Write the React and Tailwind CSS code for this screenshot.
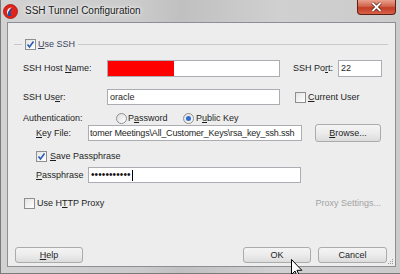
import React from "react";

function Check({ checked }) {
  return (
    <span className="w-[11px] h-[11px] shrink-0 border border-[#8f8f8f] bg-gradient-to-br from-[#e4e4e4] to-white flex items-center justify-center">
      {checked && (
        <svg width="9" height="9" viewBox="0 0 9 9">
          <path d="M1.5 4.5 L3.5 7 L7.5 1.5" fill="none" stroke="#2a5bb8" strokeWidth="1.6" />
        </svg>
      )}
    </span>
  );
}

function Radio({ checked }) {
  return (
    <span className="w-[11px] h-[11px] shrink-0 rounded-full border border-[#8f8f8f] bg-gradient-to-br from-[#dcdcdc] to-white flex items-center justify-center">
      {checked && <span className="w-[5px] h-[5px] rounded-full bg-[#2f6bd0]" />}
    </span>
  );
}

function Btn({ className = "", children }) {
  return (
    <div
      className={`h-[16px] shrink-0 rounded-[3px] border border-[#ababab] bg-gradient-to-b from-[#f4f4f4] via-[#ececec] to-[#dcdcdc] flex items-center justify-center text-[#1e1e1e] ${className}`}
    >
      {children}
    </div>
  );
}

function Field({ className = "", children }) {
  return (
    <div
      className={`h-[16px] shrink-0 bg-white border border-[#abadb3] flex items-center overflow-hidden whitespace-nowrap ${className}`}
    >
      {children}
    </div>
  );
}

export default function App() {
  return (
    <div className="w-[400px] h-[274px] relative overflow-hidden flex flex-col bg-[linear-gradient(90deg,#d2d2d2_0%,#cacaca_35%,#c0c0c0_45%,#d0d0d0_70%,#cbcbcb_100%)] border-l border-[#7a7a7a] font-['Liberation_Sans',Arial,sans-serif] text-[9px] text-[#1e1e1e] leading-none">
      {/* Title bar */}
      <div className="h-[22px] shrink-0 flex items-center relative">
        <svg className="ml-[2px]" width="15" height="15" viewBox="0 0 15 15">
          <circle cx="7.5" cy="7.5" r="7" fill="#e2231a" />
          <circle cx="7.5" cy="7.5" r="7" fill="none" stroke="#a8120c" strokeWidth="0.8" />
          <path d="M4.5 10.5 C3 7 5.5 3 9 3.5 C6.5 4.5 5.5 7.5 7 10.5 Z" fill="#ffffff" />
          <path d="M5 12 C4 8.5 6 5 9.5 4.5 C7.5 6 7 9 8.5 12 Z" fill="#1d4fa8" />
        </svg>
        <span className="ml-[7px] text-[10px] text-[#1a1a1a] [text-shadow:0_0_7px_#ffffff,0_0_3px_#ffffff]">
          SSH Tunnel Configuration
        </span>
        <div className="absolute left-[356px] top-0 w-[39px] h-[15px] rounded-b-[4px] border border-t-0 border-[#5e2016] bg-[linear-gradient(180deg,#e9a08e_0%,#d2644c_45%,#c23d24_55%,#d8624a_100%)] flex items-center justify-center">
          <svg width="11" height="10" viewBox="0 0 11 10">
            <path d="M1.5 1 L9.5 9 M9.5 1 L1.5 9" stroke="#4a1a12" strokeWidth="3.2" />
            <path d="M1.5 1 L9.5 9 M9.5 1 L1.5 9" stroke="#ffffff" strokeWidth="1.8" />
          </svg>
        </div>
      </div>

      {/* Content */}
      <div className="ml-[6px] w-[389px] flex-1 border border-[#8c8f94] bg-[#ededed] flex flex-col relative">
        {/* Use SSH separator */}
        <div className="mt-[15px] h-[12px] flex items-center ml-[6px] mr-[7px]">
          <span className="w-[8px] h-px bg-[#c9c9c9]" />
          <span className="ml-[3px]">
            <Check checked />
          </span>
          <span className="ml-[2px] text-[#3a4660]">
            <u>U</u>se SSH
          </span>
          <span className="ml-[3px] flex-1 h-px bg-[#c9c9c9]" />
        </div>

        {/* Host */}
        <div className="mt-[10px] h-[17px] flex items-center ml-[15px]">
          <span className="w-[84px]">
            SSH Host <u>N</u>ame:
          </span>
          <div className="w-[173px] h-[17px] bg-white border border-[#abadb3] flex">
            <span className="w-[66px] h-full bg-[#ff0000]" />
          </div>
          <span className="ml-[13px] w-[45px]">
            SSH Po<u>r</u>t:
          </span>
          <Field className="w-[44px] h-[17px] pl-[2px]">22</Field>
        </div>

        {/* User */}
        <div className="mt-[12px] h-[16px] flex items-center ml-[15px]">
          <span className="w-[84px]">
            SSH Us<u>e</u>r:
          </span>
          <Field className="w-[173px] pl-[2px]">oracle</Field>
          <span className="ml-[15px]">
            <Check />
          </span>
          <span className="ml-[2px]">
            <u>C</u>urrent User
          </span>
        </div>

        {/* Authentication */}
        <div className="mt-[8px] h-[10px] flex items-center ml-[15px]">
          <span className="w-[93px]">Authentication:</span>
          <Radio />
          <span className="ml-[1px] w-[55px]">
            P<u>a</u>ssword
          </span>
          <Radio checked />
          <span className="ml-[2px]">
            P<u>u</u>blic Key
          </span>
        </div>

        {/* Key file */}
        <div className="mt-[1px] h-[18px] flex items-center ml-[28px]">
          <span className="w-[52px]">
            <u>K</u>ey File:
          </span>
          <Field className="w-[214px] pl-[1px]">
            <span className="tracking-[-0.18px]">tomer Meetings\All_Customer_Keys\rsa_key_ssh.ssh</span>
          </Field>
          <Btn className="ml-[13px] w-[66px] h-[18px]">
            <u>B</u>rowse...
          </Btn>
        </div>

        {/* Save passphrase */}
        <div className="mt-[8px] h-[12px] flex items-center ml-[28px]">
          <Check checked />
          <span className="ml-[3px]">
            <u>S</u>ave Passphrase
          </span>
        </div>

        {/* Passphrase */}
        <div className="mt-[5px] h-[16px] flex items-center ml-[28px]">
          <span className="w-[52px]">
            <u>P</u>assphrase
          </span>
          <Field className="w-[213px] pl-[2px]">
            <span className="text-[10px] tracking-[0.1px] text-[#111]">•••••••••••</span>
            <span className="ml-[1px] w-px h-[11px] bg-black" />
          </Field>
        </div>

        {/* HTTP proxy */}
        <div className="mt-[14px] h-[12px] flex items-center ml-[16px] mr-[14px]">
          <Check />
          <span className="ml-[2px]">
            Use H<u>T</u>TP Proxy
          </span>
          <span className="ml-auto text-[#a3a3a3]">Proxy Settings...</span>
        </div>

        {/* Buttons */}
        <div className="mt-auto mb-[3px] flex items-center ml-[7px] mr-[8px]">
          <Btn className="w-[68px]">
            <u>H</u>elp
          </Btn>
          <Btn className="ml-auto w-[68px]">OK</Btn>
          <Btn className="ml-[7px] w-[69px]">Cancel</Btn>
        </div>

        {/* resize grip */}
        <svg className="absolute right-[1px] bottom-[1px]" width="7" height="7" viewBox="0 0 7 7">
          <rect x="5" y="1" width="1" height="1" fill="#9a9a9a" />
          <rect x="3" y="3" width="1" height="1" fill="#9a9a9a" />
          <rect x="5" y="3" width="1" height="1" fill="#9a9a9a" />
          <rect x="1" y="5" width="1" height="1" fill="#9a9a9a" />
          <rect x="3" y="5" width="1" height="1" fill="#9a9a9a" />
          <rect x="5" y="5" width="1" height="1" fill="#9a9a9a" />
        </svg>
      </div>

      {/* bottom frame */}
      <div className="h-[7px] shrink-0 border-b border-[#7a7a7a]" />

      {/* mouse cursor */}
      <svg className="absolute left-[290px] top-[259px]" width="12" height="19" viewBox="0 0 12 19">
        <path d="M0.5 0.5 L0.5 15.5 L4 12 L6.5 18 L8.5 17 L6 11.3 L10.8 11.3 Z" fill="#ffffff" stroke="#000000" strokeWidth="1" strokeLinejoin="round" />
      </svg>
    </div>
  );
}
